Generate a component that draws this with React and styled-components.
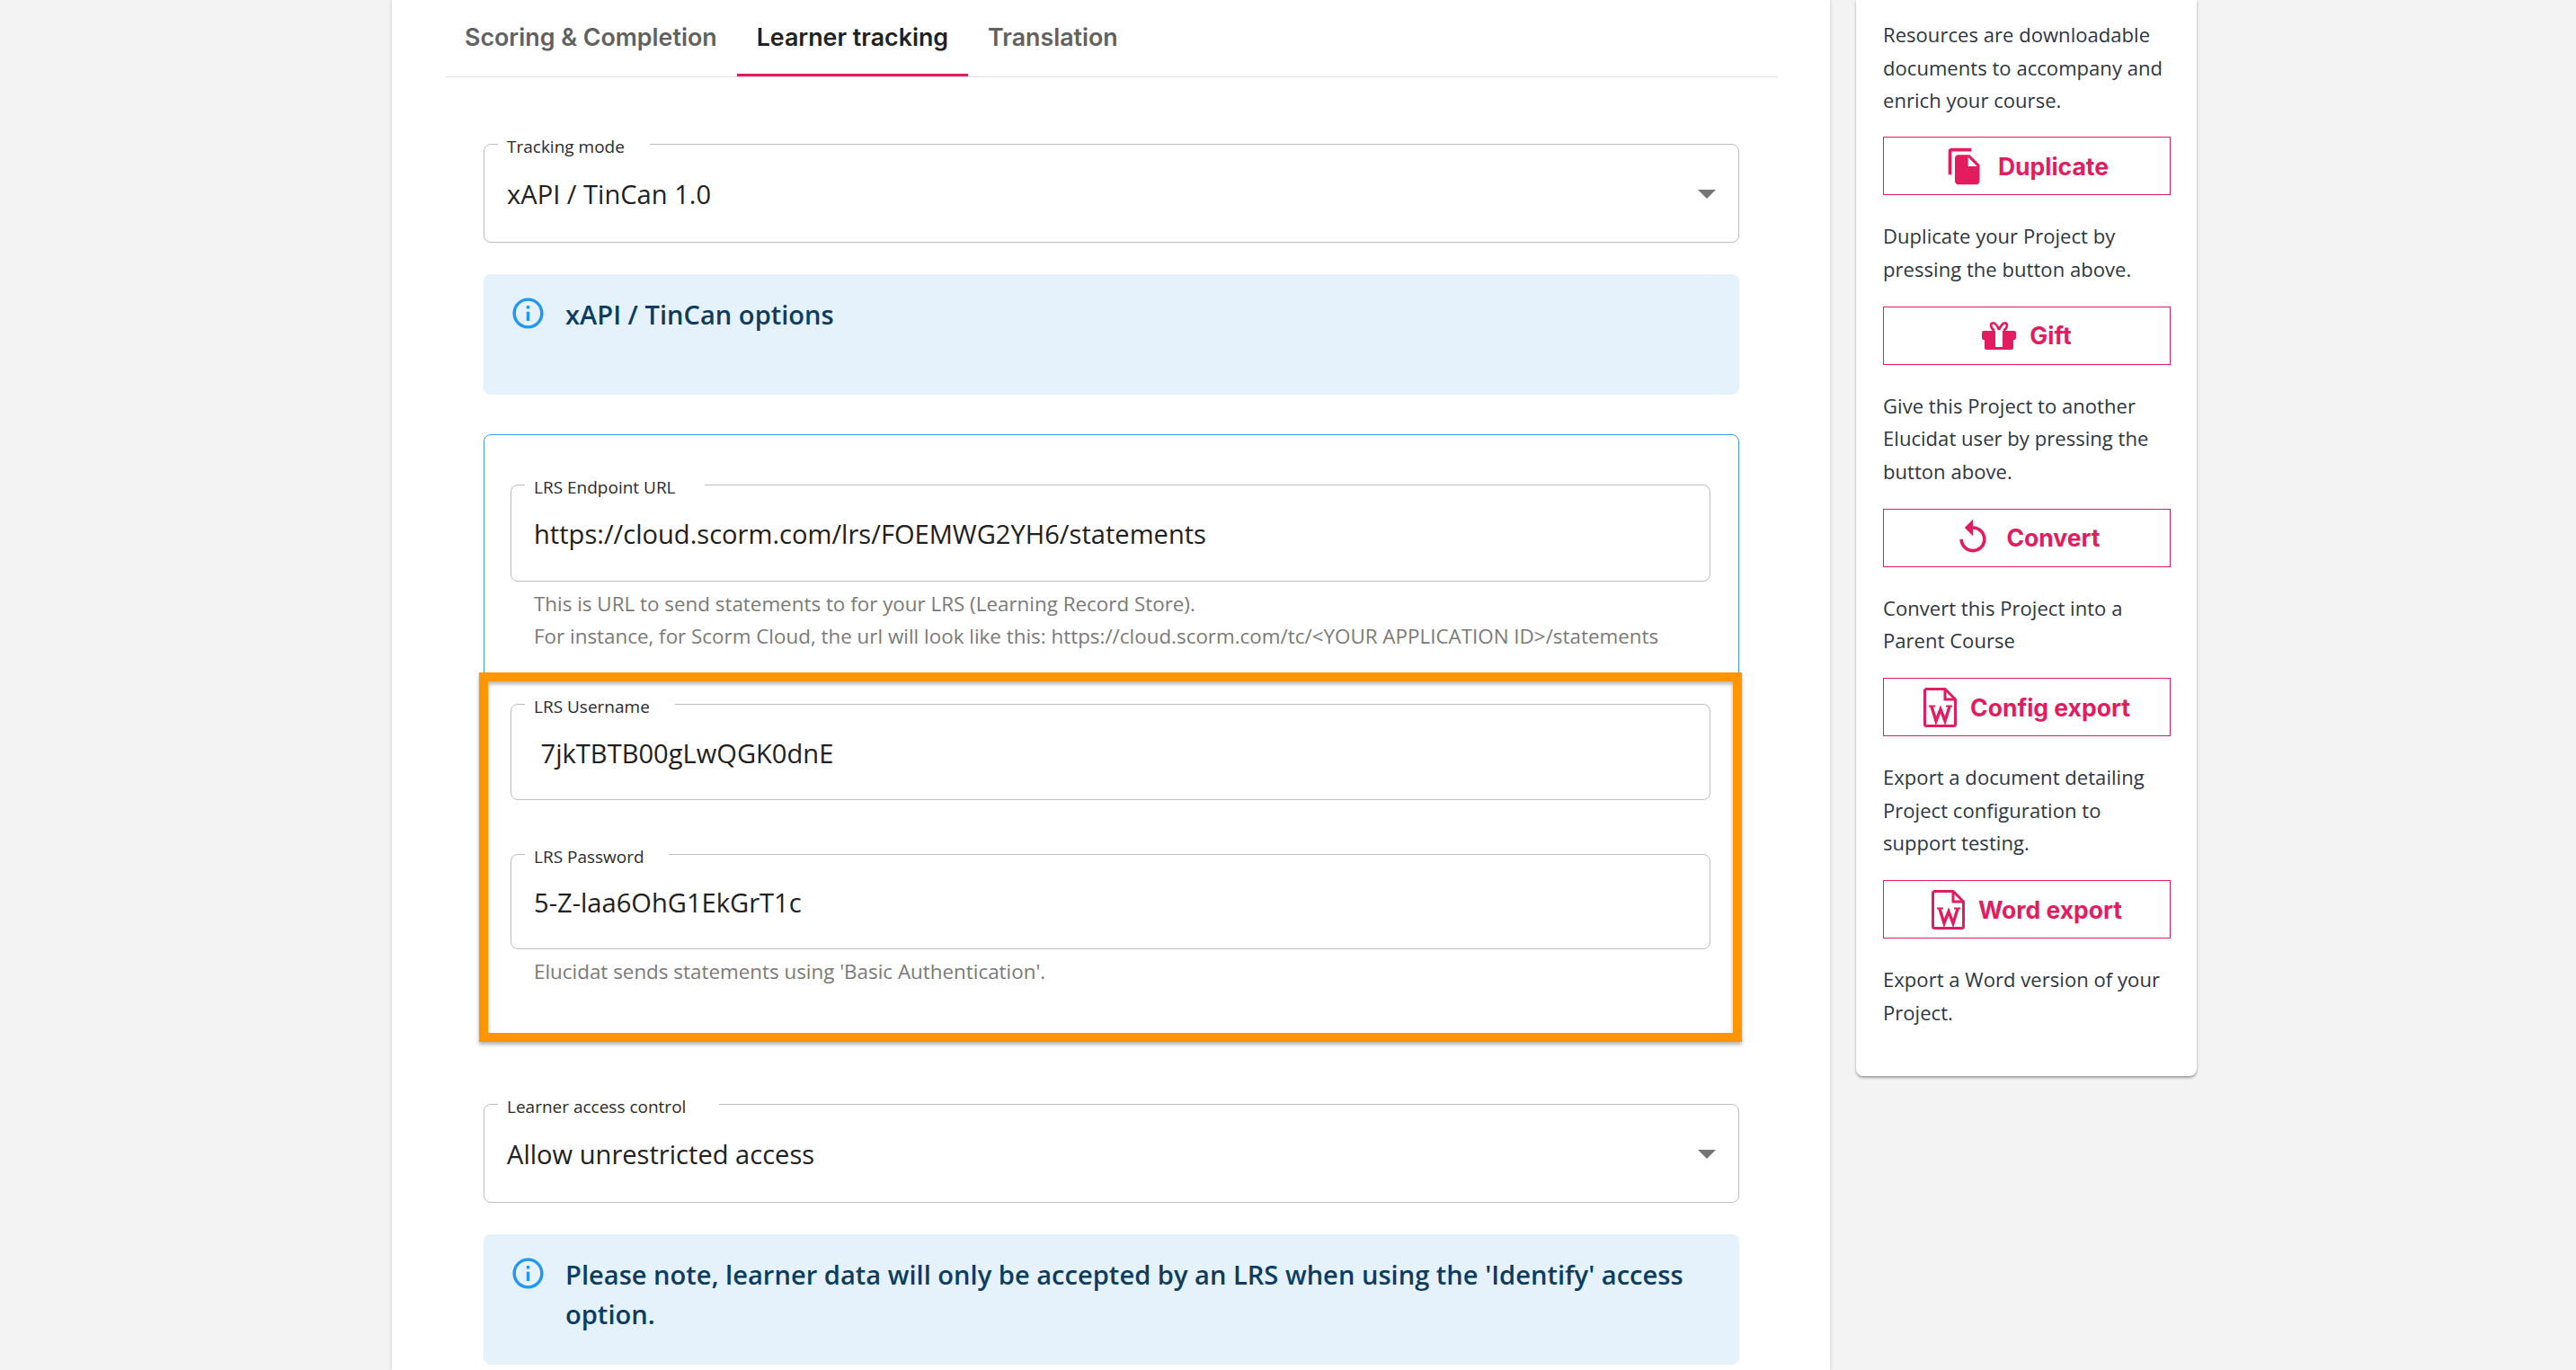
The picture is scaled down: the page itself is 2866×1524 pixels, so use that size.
import styled, { createGlobalStyle } from 'styled-components';

const GlobalStyle = createGlobalStyle`
  html, body {
    margin: 0;
    padding: 0;
    background: #f3f3f3;
  }
  * {
    box-sizing: border-box;
  }
`;

const Page = styled.div`
  width: 2866px;
  height: 1524px;
  display: flex;
  align-items: flex-start;
  gap: 29px;
  padding-left: 436px;
  overflow: hidden;
  font-family: 'Open Sans', 'Noto Sans', sans-serif;
`;

const MainPanel = styled.main`
  width: 1600px;
  height: 1524px;
  flex-shrink: 0;
  background: #fff;
  box-shadow: 0 0 4px rgba(0, 0, 0, 0.18);
`;

const Tabs = styled.nav`
  display: flex;
  height: 86px;
  margin: 0 58px 0 59px;
  border-bottom: 1px solid #e0e0e0;
`;

const Tab = styled.div`
  height: 85px;
  padding: 0 22px;
  display: flex;
  align-items: center;
  border-bottom: 3px solid ${(p) => (p.$active ? '#e31c5f' : 'transparent')};
  font-family: 'Inter', sans-serif;
  font-size: 26.8px;
  font-weight: 600;
  color: ${(p) => (p.$active ? '#222' : '#616161')};
`;

const Form = styled.div`
  padding: 62px 101px 0 102px;
`;

const Field = styled.fieldset`
  margin: ${(p) => p.$top || 0}px 0 0;
  padding: 0;
  min-width: 0;
  border: 1px solid #bdbdbd;
  border-radius: 8px;
`;

const Legend = styled.legend`
  margin-left: ${(p) => p.$inset}px;
  padding: 5px ${(p) => p.$notch}px 0 10px;
  font-size: 19px;
  line-height: 20px;
  color: #2b2b2b;
`;

const ValueRow = styled.div`
  height: ${(p) => p.$height}px;
  padding: 0 ${(p) => p.$pad}px 10px;
  display: flex;
  align-items: center;
  justify-content: space-between;
  font-size: 29.1px;
  line-height: 40px;
  color: #212121;
  white-space: pre;
`;

const Arrow = styled.span`
  width: 0;
  height: 0;
  border-left: 10px solid transparent;
  border-right: 10px solid transparent;
  border-top: 10px solid #757575;
`;

const Alert = styled.div`
  margin-top: ${(p) => p.$top}px;
  min-height: 134px;
  padding: 23px 29px 34px;
  display: flex;
  gap: 21px;
  background: #e5f2fc;
  border-radius: 8px;
`;

const AlertIcon = styled.svg`
  width: 41px;
  height: 41px;
  flex-shrink: 0;
  fill: #2196f3;
`;

const AlertText = styled.div`
  font-size: 29.1px;
  font-weight: 600;
  line-height: 44px;
  color: #0d3c61;
`;

const OptionsBox = styled.section`
  position: relative;
  height: 672px;
  margin-top: 44px;
  padding: 43px 31px 0 29px;
  border: 1px solid #3d9ee9;
  border-radius: 8px;
`;

const Helper = styled.p`
  margin: 7px 0 0;
  padding-left: 26px;
  font-size: 22.4px;
  line-height: 36px;
  color: #7a7a7a;
`;

const Highlight = styled.div`
  position: absolute;
  top: 264px;
  left: -6px;
  right: -4px;
  bottom: -5px;
  border: 10px solid #ff9500;
  box-shadow: 0 3px 4px rgba(0, 0, 0, 0.3), inset 0 3px 4px rgba(0, 0, 0, 0.3);
  pointer-events: none;
`;

const Sidebar = styled.aside`
  width: 379px;
  flex-shrink: 0;
  padding: 20px 29px 29px 30px;
  background: #fff;
  border-radius: 0 0 8px 8px;
  box-shadow: 0 2px 3px rgba(0, 0, 0, 0.35);
`;

const SideText = styled.p`
  margin: ${(p) => (p.$first ? 0 : '27px')} 0 ${(p) => (p.$first ? '22.5px' : '23.5px')};
  font-size: 22px;
  line-height: 36.5px;
  letter-spacing: 0.05px;
  color: #2d3642;
`;

const ActionButton = styled.button`
  width: 320px;
  height: 65px;
  padding: 0;
  display: flex;
  align-items: center;
  justify-content: center;
  gap: 15px;
  background: #fff;
  border: 1px solid #e31c5f;
  font-family: 'Inter', sans-serif;
  font-size: 26.5px;
  font-weight: 700;
  color: #e31c5f;
`;

const ButtonIcon = styled.svg`
  flex-shrink: 0;
  fill: #e31c5f;
`;

const InfoIcon = () => (
  <AlertIcon viewBox="0 0 24 24">
    <path d="M11 7h2v2h-2zm0 4h2v6h-2zm1-9C6.48 2 2 6.48 2 12s4.48 10 10 10 10-4.48 10-10S17.52 2 12 2zm0 18c-4.41 0-8-3.59-8-8s3.59-8 8-8 8 3.59 8 8-3.59 8-8 8z" />
  </AlertIcon>
);

const DuplicateIcon = () => (
  <ButtonIcon width="44" height="44" viewBox="0 0 24 24">
    <path d="M16 1H4c-1.1 0-2 .9-2 2v14h2V3h12V1zm-1 4l6 6v10c0 1.1-.9 2-2 2H7.99C6.89 23 6 22.1 6 21l.01-14c0-1.1.89-2 1.99-2h7zm-1 7h5.5L14 6.5V12z" />
  </ButtonIcon>
);

const GiftIcon = () => (
  <ButtonIcon width="38" height="32" viewBox="0 0 38 32">
    <path d="M2 11h34a2 2 0 0 1 2 2v6a2 2 0 0 1-2 2h-1v9a2 2 0 0 1-2 2H5a2 2 0 0 1-2-2v-9H2a2 2 0 0 1-2-2v-6a2 2 0 0 1 2-2z" />
    <path d="M19 10C17 5 14 1.500 11.500 2.500 9 3.500 10 9 14 10.500M19 10C21 5 24 1.500 26.500 2.500 29 3.500 28 9 24 10.500" fill="none" stroke="#e31c5f" strokeWidth="2.6" />
    <rect x="15" y="11" width="8" height="18" fill="#fff" />
  </ButtonIcon>
);

const ConvertIcon = () => (
  <ButtonIcon width="44" height="44" viewBox="0 0 24 24">
    <path d="M12 5V1L7 6l5 5V7c3.31 0 6 2.69 6 6s-2.69 6-6 6-6-2.69-6-6H4c0 4.42 3.58 8 8 8s8-3.58 8-8-3.58-8-8-8z" />
  </ButtonIcon>
);

const WordIcon = () => (
  <ButtonIcon width="37" height="44" viewBox="0 0 37 44">
    <path d="M3.500 1.500H24L35.500 13V40.500a2 2 0 0 1-2 2H3.500a2 2 0 0 1-2-2V3.500a2 2 0 0 1 2-2z" fill="none" stroke="#e31c5f" strokeWidth="3" />
    <path d="M24 2V13H35" fill="none" stroke="#e31c5f" strokeWidth="3" />
    <path d="M9 21L14 37L19 24L24 37L29 21" fill="none" stroke="#e31c5f" strokeWidth="3.400" />
    <path d="M6 20.500H13M25 20.500H32" fill="none" stroke="#e31c5f" strokeWidth="2" />
  </ButtonIcon>
);

const sections = [
  { label: 'Duplicate', icon: <DuplicateIcon />, text: 'Duplicate your Project by pressing the button above.' },
  { label: 'Gift', icon: <GiftIcon />, text: 'Give this Project to another Elucidat user by pressing the button above.' },
  { label: 'Convert', icon: <ConvertIcon />, text: 'Convert this Project into a Parent Course' },
  { label: 'Config export', icon: <WordIcon />, text: 'Export a document detailing Project configuration to support testing.' },
  { label: 'Word export', icon: <WordIcon />, text: 'Export a Word version of your Project.' },
];

export default function App() {
  return (
    <>
      <GlobalStyle />
      <Page>
        <MainPanel>
          <Tabs>
            <Tab>Scoring &amp; Completion</Tab>
            <Tab $active>Learner tracking</Tab>
            <Tab>Translation</Tab>
          </Tabs>
          <Form>
            <Field>
              <Legend $inset={15} $notch={28}>Tracking mode</Legend>
              <ValueRow $height={96} $pad={25}>
                xAPI / TinCan 1.0
                <Arrow />
              </ValueRow>
            </Field>
            <Alert $top={35}>
              <InfoIcon />
              <AlertText>xAPI / TinCan options</AlertText>
            </Alert>
            <OptionsBox>
              <Field>
                <Legend $inset={15} $notch={32}>LRS Endpoint URL</Legend>
                <ValueRow $height={94} $pad={25}>https://cloud.scorm.com/lrs/FOEMWG2YH6/statements</ValueRow>
              </Field>
              <Helper>
                This is URL to send statements to for your LRS (Learning Record Store).
                <br />
                For instance, for Scorm Cloud, the url will look like this: https://cloud.scorm.com/tc/&lt;YOUR APPLICATION ID&gt;/statements
              </Helper>
              <Field $top={45}>
                <Legend $inset={15} $notch={28}>LRS Username</Legend>
                <ValueRow $height={93} $pad={25}> 7jkTBTB00gLwQGK0dnE</ValueRow>
              </Field>
              <Field $top={48}>
                <Legend $inset={15} $notch={27}>LRS Password</Legend>
                <ValueRow $height={92} $pad={25}>5-Z-laa6OhG1EkGrT1c</ValueRow>
              </Field>
              <Helper>Elucidat sends statements using 'Basic Authentication'.</Helper>
              <Highlight />
            </OptionsBox>
            <Field $top={61}>
              <Legend $inset={15} $notch={37}>Learner access control</Legend>
              <ValueRow $height={96} $pad={25}>
                Allow unrestricted access
                <Arrow />
              </ValueRow>
            </Field>
            <Alert $top={35}>
              <InfoIcon />
              <AlertText>Please note, learner data will only be accepted by an LRS when using the 'Identify' access option.</AlertText>
            </Alert>
          </Form>
        </MainPanel>
        <Sidebar>
          <SideText $first>Resources are downloadable documents to accompany and enrich your course.</SideText>
          {sections.map((s) => (
            <div key={s.label}>
              <ActionButton>
                {s.icon}
                {s.label}
              </ActionButton>
              <SideText>{s.text}</SideText>
            </div>
          ))}
        </Sidebar>
      </Page>
    </>
  );
}
